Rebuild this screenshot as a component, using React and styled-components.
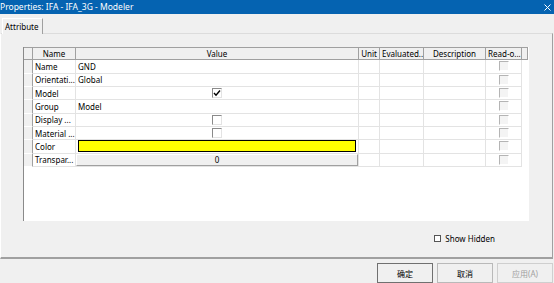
import React from 'react';
import styled, { createGlobalStyle } from 'styled-components';

const GlobalStyle = createGlobalStyle`
  html, body {
    margin: 0;
    padding: 0;
    background: #f0f0f0;
  }
  body {
    font-family: "Noto Sans", "Noto Sans CJK SC", sans-serif;
    font-size: 8px;
    color: #000;
  }
`;

const Window = styled.div`
  width: 554px;
  height: 283px;
  display: flex;
  flex-direction: column;
  overflow: hidden;
  background: #f0f0f0;
`;

const TitleBar = styled.div`
  height: 14px;
  flex-shrink: 0;
  background: #0563b1;
  color: #fff;
  display: flex;
  align-items: center;
  justify-content: space-between;
  padding-right: 3px;
  font-size: 8.5px;
  line-height: 14px;
`;

const CloseIcon = styled.svg`
  width: 7px;
  height: 7px;
  display: block;
`;

const TabStrip = styled.div`
  height: 19px;
  flex-shrink: 0;
  display: flex;
  align-items: flex-end;
  padding-left: 2px;
`;

const Tab = styled.div`
  height: 15px;
  padding: 0 3px 0 2px;
  border-left: 1px solid #fff;
  border-top: 1px solid #fff;
  border-right: 1px solid #a0a0a0;
  display: flex;
  align-items: center;
  position: relative;
  top: 1px;
  background: #f0f0f0;
`;

const Panel = styled.div`
  flex: 1;
  margin-right: 1px;
  border-top: 1px solid #dcdcdc;
  border-left: 1px solid #fff;
  border-right: 1px solid #a0a0a0;
  border-bottom: 2px solid #a0a0a0;
  padding: 13px 0 0 22px;
  display: flex;
  flex-direction: column;
`;

const Grid = styled.div`
  width: 505px;
  height: 174px;
  background: #fff;
  border-left: 1px solid #8a8a8a;
  display: grid;
  grid-template-columns: 9px 43px 283px 21px 44px 62px 36px 6px;
  grid-auto-rows: 13.33px;
  align-content: start;
`;

const HeadCell = styled.div`
  background: #f0f0f0;
  border-top: 1px solid #a0a0a0;
  border-right: 1px solid #a0a0a0;
  border-bottom: 1px solid #a0a0a0;
  display: flex;
  align-items: center;
  justify-content: ${p => (p.left ? 'flex-start' : 'center')};
  padding-left: ${p => (p.left ? '2px' : '0')};
  white-space: nowrap;
  overflow: hidden;
`;

const RowHead = styled.div`
  background: #f0f0f0;
  border-right: 1px solid #a0a0a0;
  border-bottom: 1px solid #fff;
`;

const Cell = styled.div`
  border-right: 1px solid #e3e3e3;
  border-bottom: 1px solid #e3e3e3;
  display: flex;
  align-items: center;
  justify-content: ${p => (p.center ? 'center' : 'flex-start')};
  padding: ${p => (p.pad ? '0 2px' : '0')};
  white-space: nowrap;
  overflow: hidden;
`;

const Filler = styled.div``;

const Check = styled.div`
  width: 10px;
  height: 10px;
  box-sizing: border-box;
  background: ${p => (p.disabled ? '#f4f4f4' : '#fff')};
  border-top: 1px solid ${p => (p.disabled ? '#b4b4b4' : '#8a8a8a')};
  border-left: 1px solid ${p => (p.disabled ? '#b4b4b4' : '#8a8a8a')};
  border-right: 1px solid ${p => (p.disabled ? '#fff' : '#e3e3e3')};
  border-bottom: 1px solid ${p => (p.disabled ? '#fff' : '#e3e3e3')};
  display: flex;
  align-items: center;
  justify-content: center;
`;

const Swatch = styled.div`
  width: 100%;
  height: 10px;
  margin: 0 2px;
  background: #ffff00;
  border: 1px solid #000;
`;

const ValueButton = styled.div`
  width: 100%;
  height: 100%;
  box-sizing: border-box;
  background: #f0f0f0;
  border-top: 1px solid #fff;
  border-left: 1px solid #fff;
  border-right: 1px solid #a0a0a0;
  border-bottom: 1px solid #a0a0a0;
  display: flex;
  align-items: center;
  justify-content: center;
`;

const HiddenRow = styled.div`
  width: 505px;
  box-sizing: border-box;
  display: flex;
  justify-content: flex-end;
  align-items: center;
  gap: 4px;
  padding-top: 12px;
  padding-right: 33px;
`;

const SmallBox = styled.div`
  width: 7px;
  height: 7px;
  box-sizing: border-box;
  background: #fff;
  border: 1px solid #555;
`;

const Footer = styled.div`
  height: 20px;
  flex-shrink: 0;
  display: flex;
  justify-content: flex-end;
  gap: 4px;
  padding-top: 4px;
  padding-right: 1px;
`;

const Button = styled.div`
  width: 56px;
  height: 20px;
  box-sizing: border-box;
  background: #f0f0f0;
  border: 1px solid ${p => (p.primary ? '#707070' : p.disabled ? '#cfcfcf' : '#b9b9b9')};
  color: ${p => (p.disabled ? '#a0a0a0' : '#000')};
  display: flex;
  align-items: center;
  justify-content: center;
  font-size: 8px;
`;

const rows = [
  { name: 'Name', value: 'GND' },
  { name: 'Orientati...', value: 'Global' },
  { name: 'Model', check: true, checked: true },
  { name: 'Group', value: 'Model' },
  { name: 'Display ...', check: true },
  { name: 'Material ...', check: true },
  { name: 'Color', color: true },
  { name: 'Transpar...', button: '0' },
];

const Tick = () => (
  <svg width="8" height="8" viewBox="0 0 8 8">
    <path d="M1 4 L3 6.2 L7 1.5" fill="none" stroke="#000" strokeWidth="1.4" />
  </svg>
);

const renderValue = row => {
  if (row.check) {
    return (
      <Cell center>
        <Check>{row.checked && <Tick />}</Check>
      </Cell>
    );
  }
  if (row.color) {
    return (
      <Cell>
        <Swatch />
      </Cell>
    );
  }
  if (row.button) {
    return (
      <Cell>
        <ValueButton>{row.button}</ValueButton>
      </Cell>
    );
  }
  return <Cell pad>{row.value}</Cell>;
};

export default function App() {
  return (
    <Window>
      <GlobalStyle />
      <TitleBar>
        <span>Properties: IFA - IFA_3G - Modeler</span>
        <CloseIcon viewBox="0 0 7 7">
          <path d="M0.5 0.5 L6.5 6.5 M6.5 0.5 L0.5 6.5" stroke="#fff" strokeWidth="1" />
        </CloseIcon>
      </TitleBar>
      <TabStrip>
        <Tab>Attribute</Tab>
      </TabStrip>
      <Panel>
        <Grid>
          <HeadCell />
          <HeadCell>Name</HeadCell>
          <HeadCell>Value</HeadCell>
          <HeadCell>Unit</HeadCell>
          <HeadCell left>Evaluated...</HeadCell>
          <HeadCell>Description</HeadCell>
          <HeadCell left>Read-o...</HeadCell>
          <HeadCell />
          {rows.map(row => (
            <React.Fragment key={row.name}>
              <RowHead />
              <Cell pad>{row.name}</Cell>
              {renderValue(row)}
              <Cell />
              <Cell />
              <Cell />
              <Cell center>
                <Check disabled />
              </Cell>
              <Filler />
            </React.Fragment>
          ))}
        </Grid>
        <HiddenRow>
          <SmallBox />
          <span>Show Hidden</span>
        </HiddenRow>
      </Panel>
      <Footer>
        <Button primary>确定</Button>
        <Button>取消</Button>
        <Button disabled>应用(A)</Button>
      </Footer>
    </Window>
  );
}
